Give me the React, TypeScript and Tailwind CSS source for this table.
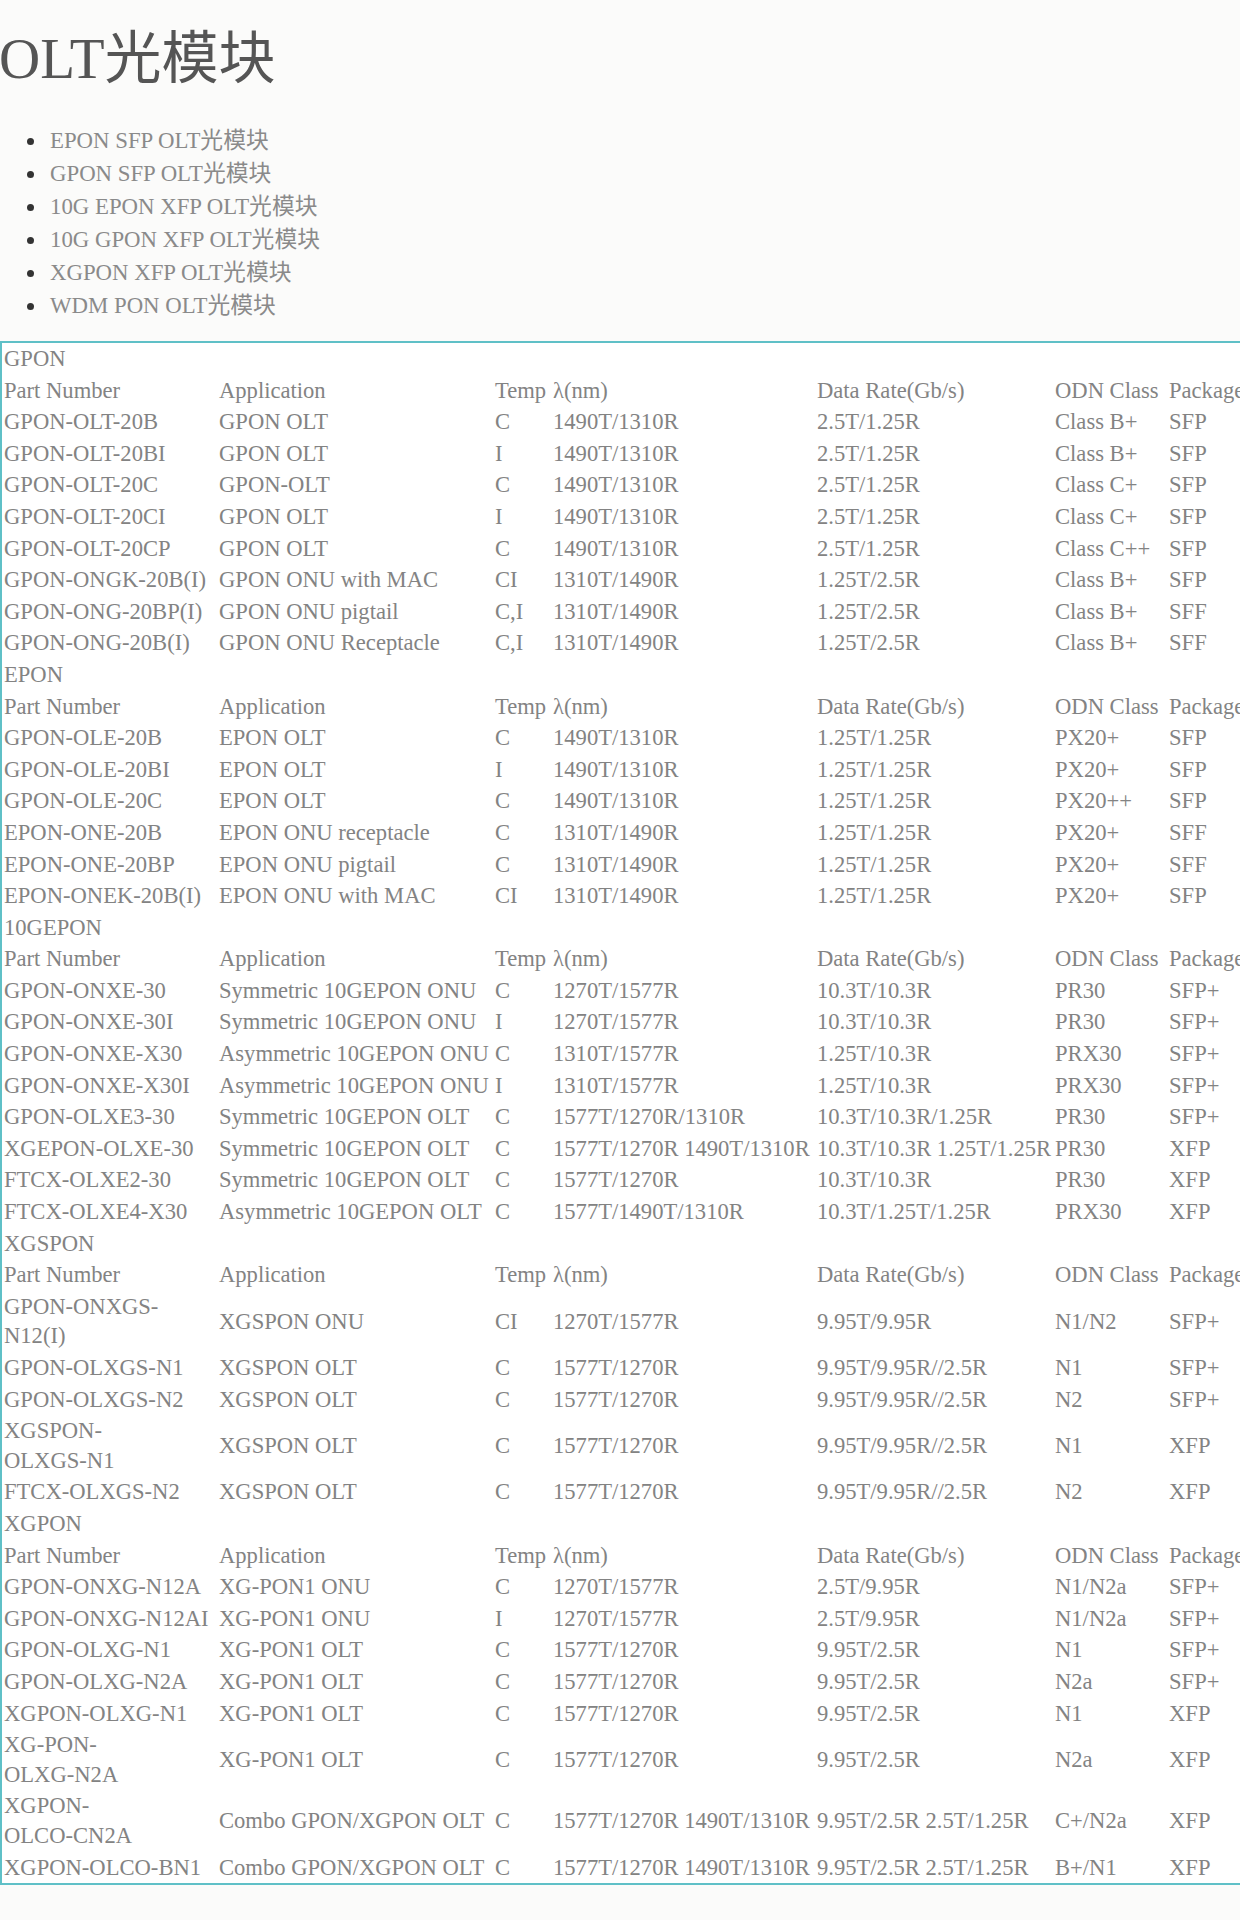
import React from "react";

type Row = [string, string, string, string, string, string, string];

const sections: { name: string; rows: Row[] }[] = [
  {
    name: "GPON",
    rows: [
      ["GPON-OLT-20B", "GPON OLT", "C", "1490T/1310R", "2.5T/1.25R", "Class B+", "SFP"],
      ["GPON-OLT-20BI", "GPON OLT", "I", "1490T/1310R", "2.5T/1.25R", "Class B+", "SFP"],
      ["GPON-OLT-20C", "GPON-OLT", "C", "1490T/1310R", "2.5T/1.25R", "Class C+", "SFP"],
      ["GPON-OLT-20CI", "GPON OLT", "I", "1490T/1310R", "2.5T/1.25R", "Class C+", "SFP"],
      ["GPON-OLT-20CP", "GPON OLT", "C", "1490T/1310R", "2.5T/1.25R", "Class C++", "SFP"],
      ["GPON-ONGK-20B(I)", "GPON ONU with MAC", "CI", "1310T/1490R", "1.25T/2.5R", "Class B+", "SFP"],
      ["GPON-ONG-20BP(I)", "GPON ONU pigtail", "C,I", "1310T/1490R", "1.25T/2.5R", "Class B+", "SFF"],
      ["GPON-ONG-20B(I)", "GPON ONU Receptacle", "C,I", "1310T/1490R", "1.25T/2.5R", "Class B+", "SFF"],
    ],
  },
  {
    name: "EPON",
    rows: [
      ["GPON-OLE-20B", "EPON OLT", "C", "1490T/1310R", "1.25T/1.25R", "PX20+", "SFP"],
      ["GPON-OLE-20BI", "EPON OLT", "I", "1490T/1310R", "1.25T/1.25R", "PX20+", "SFP"],
      ["GPON-OLE-20C", "EPON OLT", "C", "1490T/1310R", "1.25T/1.25R", "PX20++", "SFP"],
      ["EPON-ONE-20B", "EPON ONU receptacle", "C", "1310T/1490R", "1.25T/1.25R", "PX20+", "SFF"],
      ["EPON-ONE-20BP", "EPON ONU pigtail", "C", "1310T/1490R", "1.25T/1.25R", "PX20+", "SFF"],
      ["EPON-ONEK-20B(I)", "EPON ONU with MAC", "CI", "1310T/1490R", "1.25T/1.25R", "PX20+", "SFP"],
    ],
  },
  {
    name: "10GEPON",
    rows: [
      ["GPON-ONXE-30", "Symmetric 10GEPON ONU", "C", "1270T/1577R", "10.3T/10.3R", "PR30", "SFP+"],
      ["GPON-ONXE-30I", "Symmetric 10GEPON ONU", "I", "1270T/1577R", "10.3T/10.3R", "PR30", "SFP+"],
      ["GPON-ONXE-X30", "Asymmetric 10GEPON ONU", "C", "1310T/1577R", "1.25T/10.3R", "PRX30", "SFP+"],
      ["GPON-ONXE-X30I", "Asymmetric 10GEPON ONU", "I", "1310T/1577R", "1.25T/10.3R", "PRX30", "SFP+"],
      ["GPON-OLXE3-30", "Symmetric 10GEPON OLT", "C", "1577T/1270R/1310R", "10.3T/10.3R/1.25R", "PR30", "SFP+"],
      ["XGEPON-OLXE-30", "Symmetric 10GEPON OLT", "C", "1577T/1270R 1490T/1310R", "10.3T/10.3R 1.25T/1.25R", "PR30", "XFP"],
      ["FTCX-OLXE2-30", "Symmetric 10GEPON OLT", "C", "1577T/1270R", "10.3T/10.3R", "PR30", "XFP"],
      ["FTCX-OLXE4-X30", "Asymmetric 10GEPON OLT", "C", "1577T/1490T/1310R", "10.3T/1.25T/1.25R", "PRX30", "XFP"],
    ],
  },
  {
    name: "XGSPON",
    rows: [
      ["GPON-ONXGS-|N12(I)", "XGSPON ONU", "CI", "1270T/1577R", "9.95T/9.95R", "N1/N2", "SFP+"],
      ["GPON-OLXGS-N1", "XGSPON OLT", "C", "1577T/1270R", "9.95T/9.95R//2.5R", "N1", "SFP+"],
      ["GPON-OLXGS-N2", "XGSPON OLT", "C", "1577T/1270R", "9.95T/9.95R//2.5R", "N2", "SFP+"],
      ["XGSPON-|OLXGS-N1", "XGSPON OLT", "C", "1577T/1270R", "9.95T/9.95R//2.5R", "N1", "XFP"],
      ["FTCX-OLXGS-N2", "XGSPON OLT", "C", "1577T/1270R", "9.95T/9.95R//2.5R", "N2", "XFP"],
    ],
  },
  {
    name: "XGPON",
    rows: [
      ["GPON-ONXG-N12A", "XG-PON1 ONU", "C", "1270T/1577R", "2.5T/9.95R", "N1/N2a", "SFP+"],
      ["GPON-ONXG-N12AI", "XG-PON1 ONU", "I", "1270T/1577R", "2.5T/9.95R", "N1/N2a", "SFP+"],
      ["GPON-OLXG-N1", "XG-PON1 OLT", "C", "1577T/1270R", "9.95T/2.5R", "N1", "SFP+"],
      ["GPON-OLXG-N2A", "XG-PON1 OLT", "C", "1577T/1270R", "9.95T/2.5R", "N2a", "SFP+"],
      ["XGPON-OLXG-N1", "XG-PON1 OLT", "C", "1577T/1270R", "9.95T/2.5R", "N1", "XFP"],
      ["XG-PON-|OLXG-N2A", "XG-PON1 OLT", "C", "1577T/1270R", "9.95T/2.5R", "N2a", "XFP"],
      ["XGPON-|OLCO-CN2A", "Combo GPON/XGPON OLT", "C", "1577T/1270R 1490T/1310R", "9.95T/2.5R 2.5T/1.25R", "C+/N2a", "XFP"],
      ["XGPON-OLCO-BN1", "Combo GPON/XGPON OLT", "C", "1577T/1270R 1490T/1310R", "9.95T/2.5R 2.5T/1.25R", "B+/N1", "XFP"],
    ],
  },
];

const header: Row = ["Part Number", "Application", "Temp", "λ(nm)", "Data Rate(Gb/s)", "ODN Class", "Package"];

const links = [
  "EPON SFP OLT光模块",
  "GPON SFP OLT光模块",
  "10G EPON XFP OLT光模块",
  "10G GPON XFP OLT光模块",
  "XGPON XFP OLT光模块",
  "WDM PON OLT光模块",
];

const cell = "px-[2px] py-[1px] leading-[29.6px] whitespace-nowrap align-middle text-left font-normal";

function Cell({ text }: { text: string }) {
  const parts = text.split("|");
  return (
    <td className={cell}>
      {parts.map((p, i) => (
        <React.Fragment key={i}>
          {i > 0 && <br />}
          {p}
        </React.Fragment>
      ))}
    </td>
  );
}

export default function App() {
  return (
    <div
      className="w-[1240px] min-h-[1920px] overflow-hidden bg-[#fbfbfa]"
      style={{ fontFamily: '"Liberation Serif", "Noto Sans CJK SC", serif' }}
    >
      <h1 className="mt-[26px] -ml-[1px] text-[57px] leading-[66px] font-normal text-[#555555] whitespace-nowrap">
        OLT光模块
      </h1>
      <ul className="mt-[33px] flex flex-col">
        {links.map((l) => (
          <li key={l} className="flex items-center h-[33px] text-[22.8px] text-[#8a8a8a] whitespace-nowrap">
            <span className="ml-[27px] mr-[16px] w-[7px] h-[7px] rounded-full bg-[#333333]" />
            <span>{l}</span>
          </li>
        ))}
      </ul>
      <div className="mt-[18px] w-[1262px] bg-white border-t-2 border-b-2 border-l-2 border-[#5fc0c7]">
        <table className="table-fixed border-collapse text-[22.6px] text-[#838383] w-[1260px]">
          <colgroup>
            <col className="w-[215px]" />
            <col className="w-[276px]" />
            <col className="w-[58px]" />
            <col className="w-[264px]" />
            <col className="w-[238px]" />
            <col className="w-[114px]" />
            <col className="w-[95px]" />
          </colgroup>
          <tbody>
            {sections.map((s) => (
              <React.Fragment key={s.name}>
                <tr>
                  <td colSpan={7} className={cell}>
                    {s.name}
                  </td>
                </tr>
                <tr>
                  {header.map((h, i) => (
                    <Cell key={i} text={h} />
                  ))}
                </tr>
                {s.rows.map((r, ri) => (
                  <tr key={ri}>
                    {r.map((c, ci) => (
                      <Cell key={ci} text={c} />
                    ))}
                  </tr>
                ))}
              </React.Fragment>
            ))}
          </tbody>
        </table>
      </div>
    </div>
  );
}
